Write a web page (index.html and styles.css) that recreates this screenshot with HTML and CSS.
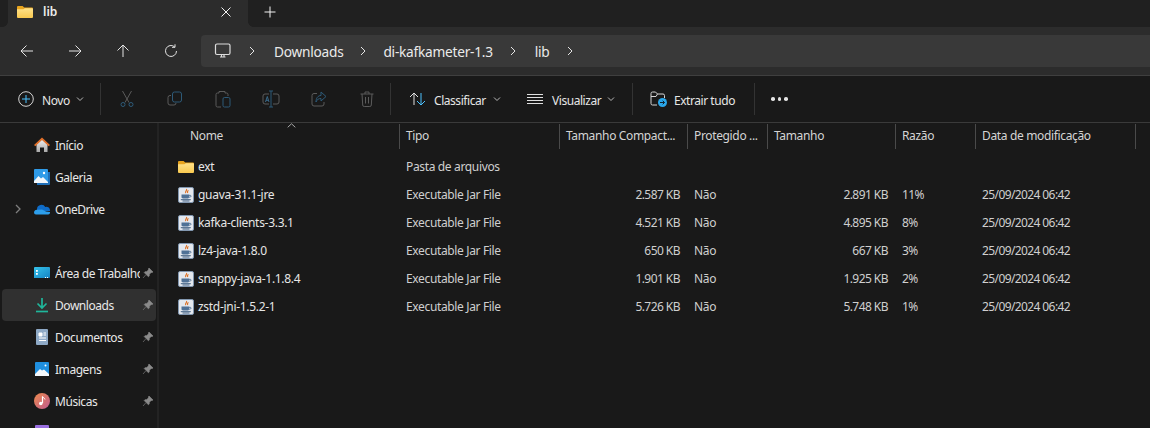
FILE: index.html
```html
<!DOCTYPE html>
<html lang="pt">
<head>
<meta charset="utf-8">
<title>lib</title>
<link rel="stylesheet" href="styles.css">
</head>
<body>
<svg class="defs" width="0" height="0" aria-hidden="true">
  <defs>
    <linearGradient id="folderFront" x1="0" y1="0" x2="0" y2="1"><stop offset="0" stop-color="#ffe28a"/><stop offset="1" stop-color="#f9c94f"/></linearGradient>
    <linearGradient id="homeWall" x1="0" y1="0" x2="0" y2="1"><stop offset="0" stop-color="#efefef"/><stop offset="1" stop-color="#a9a9a9"/></linearGradient>
    <linearGradient id="deskFill" x1="0" y1="0" x2="1" y2="1"><stop offset="0" stop-color="#35c3ea"/><stop offset="1" stop-color="#1583c4"/></linearGradient>
    <symbol id="folder" viewBox="0 0 16 16">
      <path d="M0 3a1 1 0 0 1 1-1h4.600l1.600 1.500H15a1 1 0 0 1 1 1V6H0z" fill="#e8a41e"/>
      <path d="M0 5.200l6.400 0 1.400-1H15a1 1 0 0 1 1 1V13a1 1 0 0 1-1 1H1a1 1 0 0 1-1-1z" fill="url(#folderFront)"/>
    </symbol>
    <symbol id="jar" viewBox="0 0 16 16">
      <rect x="0.500" y="0.500" width="15" height="15" rx="1.500" fill="#e4e8ee" stroke="#8297b0"/>
      <path d="M8.500 2c1 1.500-2 2.500-.7 4.200M10.500 3.500c-1.600.8-1.200 1.600-.6 2.500" fill="none" stroke="#dc6f22" stroke-width="1.100"/>
      <path d="M3.500 7.500h7.500v2.800c0 .8-.8 1.200-1.500 1.200H5c-.8 0-1.500-.5-1.500-1.200z" fill="#4f7196"/>
      <path d="M11 8.300h1.200c1 0 1 1.800-.2 1.800H11" fill="none" stroke="#4f7196"/>
      <path d="M2.800 12.700h10M4.500 14h7" stroke="#3f5f82" stroke-width="1"/>
    </symbol>
    <symbol id="pin" viewBox="0 0 12 12">
      <path d="M7 1l4 4-1 .6-.8-.2L7.400 7.300l-.2 1.800-.8.700L2.200 5.600l.7-.8 1.800-.2L6.600 2.800l-.2-.8zM3.800 7.800L1 11" fill="#8a8a8a" stroke="#8a8a8a" stroke-width=".6"/>
    </symbol>
  </defs>
</svg>

<header class="tabbar">
  <div class="tab">
    <svg class="tab-folder" width="16" height="16"><use href="#folder"/></svg>
    <span class="tab-title">lib</span>
    <svg class="tab-close" width="12" height="12" viewBox="0 0 12 12"><path d="M1.500 1.500l9 9M10.500 1.500l-9 9" stroke="#f2f2f2" fill="none"/></svg>
  </div>
  <svg class="tab-add" width="14" height="14" viewBox="0 0 14 14"><path d="M7 1.500v11M1.500 7h11" stroke="#f2f2f2" fill="none"/></svg>
</header>

<nav class="navbar">
  <div class="nav-buttons">
    <svg width="16" height="16" viewBox="0 0 16 16"><path d="M14 8H2M7.500 2.500L2 8l5.500 5.500" class="st-nav"/></svg>
    <svg width="16" height="16" viewBox="0 0 16 16"><path d="M2 8h12M8.500 2.500L14 8l-5.500 5.500" class="st-nav"/></svg>
    <svg width="16" height="16" viewBox="0 0 16 16"><path d="M8 14V2M2.500 7.500L8 2l5.500 5.500" class="st-nav"/></svg>
    <svg width="16" height="16" viewBox="0 0 16 16"><path d="M13.500 8a5.500 5.500 0 1 1-1.800-4.100M12 1.300v3h-3" class="st-nav"/></svg>
  </div>
  <div class="crumbs">
    <svg class="pc" width="18" height="18" viewBox="0 0 18 18"><rect x="1.500" y="2" width="14.500" height="10.500" rx="1.500" class="st-pc"/><path d="M6 15h5.500M7.500 13v2M10 13v2" class="st-pc"/></svg>
    <svg class="chev" width="8" height="10" viewBox="0 0 8 10"><path d="M2 1l4 4-4 4" class="st-nav"/></svg>
    <span class="crumb">Downloads</span>
    <svg class="chev" width="8" height="10" viewBox="0 0 8 10"><path d="M2 1l4 4-4 4" class="st-nav"/></svg>
    <span class="crumb crumb-mid">di-kafkameter-1.3</span>
    <svg class="chev" width="8" height="10" viewBox="0 0 8 10"><path d="M2 1l4 4-4 4" class="st-nav"/></svg>
    <span class="crumb">lib</span>
    <svg class="chev" width="8" height="10" viewBox="0 0 8 10"><path d="M2 1l4 4-4 4" class="st-nav"/></svg>
  </div>
</nav>

<section class="toolbar">
  <div class="tool tool-new">
    <svg width="16" height="16" viewBox="0 0 16 16"><circle cx="8" cy="8" r="7.300" fill="none" stroke="#d5d5d5"/><path d="M8 4v8M4 8h8" stroke="#4cc2ff" fill="none"/></svg>
    <span class="tool-label">Novo</span>
    <svg class="caret" width="8" height="6" viewBox="0 0 8 6"><path d="M1 1.500l3 3 3-3" class="st-caret"/></svg>
  </div>
  <span class="sep"></span>
  <div class="disabled-tools">
    <svg width="16" height="18" viewBox="0 0 16 18"><path d="M3.500 1l6.500 11.500M12.500 1L6 12.500" stroke="#5b5b5b" fill="none"/><circle cx="4" cy="14.500" r="2" fill="none" stroke="#2d5a78"/><circle cx="12" cy="14.500" r="2" fill="none" stroke="#2d5a78"/></svg>
    <svg width="16" height="16" viewBox="0 0 16 16"><rect x="5.500" y="1" width="9" height="10" rx="2" fill="none" stroke="#2d5a78"/><path d="M4 4.500H3a2 2 0 0 0-2 2V12a2 2 0 0 0 2 2h4a2 2 0 0 0 2-2" fill="none" stroke="#5b5b5b"/></svg>
    <svg width="16" height="18" viewBox="0 0 16 18"><path d="M4 3H2.500A1.500 1.500 0 0 0 1 4.500v11A1.500 1.500 0 0 0 2.500 17H6M4 3V1.500h6V3M10 3h1.500A1.500 1.500 0 0 1 13 4.500V6" fill="none" stroke="#5b5b5b"/><rect x="8" y="7.500" width="7" height="9.500" rx="1.500" fill="none" stroke="#2d5a78"/></svg>
    <svg width="18" height="18" viewBox="0 0 18 18"><path d="M7 4H3a2 2 0 0 0-2 2v6a2 2 0 0 0 2 2h4M11 4h4a2 2 0 0 1 2 2v6a2 2 0 0 1-2 2h-4" fill="none" stroke="#5b5b5b"/><path d="M9 1v16M7 1h4M7 17h4" stroke="#2d5a78" fill="none"/><path d="M3.500 12L5.300 6.500 7 12M4 10.300h2.500" stroke="#3a6a8a" fill="none"/></svg>
    <svg width="16" height="16" viewBox="0 0 16 16"><path d="M6 2.500H3a2 2 0 0 0-2 2V13a2 2 0 0 0 2 2h8a2 2 0 0 0 2-2v-2" fill="none" stroke="#5b5b5b"/><path d="M10 1l5 4.500L10 10V7.500C7.500 7.500 6 8.500 5 11c0-4 2-6.500 5-6.500z" fill="none" stroke="#2d5a78"/></svg>
    <svg width="14" height="16" viewBox="0 0 14 16"><path d="M.5 3h13M5 3V1h4v2M2 3l.7 11a1.500 1.500 0 0 0 1.500 1.500h5.600a1.500 1.500 0 0 0 1.500-1.500L12 3M5.500 6v6.500M8.500 6v6.500" fill="none" stroke="#5b5b5b"/></svg>
  </div>
  <span class="sep"></span>
  <div class="tool tool-sort">
    <svg width="18" height="16" viewBox="0 0 18 16"><path d="M5 14V2M1 6l4-4 4 4" stroke="#e0e0e0" fill="none"/><path d="M12 2v12M8 10l4 4 4-4" stroke="#4cc2ff" fill="none"/></svg>
    <span class="tool-label">Classificar</span>
    <svg class="caret" width="8" height="6" viewBox="0 0 8 6"><path d="M1 1.500l3 3 3-3" class="st-caret"/></svg>
  </div>
  <div class="tool tool-view">
    <svg width="16" height="12" viewBox="0 0 16 12"><path d="M0 1.500h16M0 4.500h16M0 7.500h16M0 10.500h16" stroke="#e0e0e0" fill="none"/></svg>
    <span class="tool-label">Visualizar</span>
    <svg class="caret" width="8" height="6" viewBox="0 0 8 6"><path d="M1 1.500l3 3 3-3" class="st-caret"/></svg>
  </div>
  <span class="sep"></span>
  <div class="tool tool-extract">
    <svg width="17" height="16" viewBox="0 0 17 16"><path d="M7 14H2.500A1.500 1.500 0 0 1 1 12.500v-10A1.500 1.500 0 0 1 2.500 1h3L7.500 3H13a1.500 1.500 0 0 1 1.500 1.500V7M1 5.500h5L7.500 3" fill="none" stroke="#d5d5d5"/><circle cx="12.500" cy="11.500" r="4.500" fill="#2aa7ea"/><path d="M10 11.500h4.500M12.700 9.700l1.800 1.800-1.800 1.800" stroke="#10222e" fill="none"/></svg>
    <span class="tool-label">Extrair tudo</span>
  </div>
  <span class="sep"></span>
  <div class="more"><i></i><i></i><i></i></div>
</section>

<main class="content">
  <aside class="sidebar">
    <ul class="nav-group">
      <li class="nav-item">
        <svg width="16" height="16" viewBox="0 0 16 16"><path d="M2.500 7.500L8 2.500l5.500 5V15H10v-4.500H6V15H2.500z" fill="url(#homeWall)"/><path d="M8 .5L0 8l1.300 1.300L8 3l6.700 6.300L16 8z" fill="#e2702a"/></svg>
        <span class="nav-label">Início</span>
      </li>
      <li class="nav-item">
        <svg width="16" height="16" viewBox="0 0 16 16"><path d="M14 3h2v12a1 1 0 0 1-1 1H3v-2h11z" fill="#1f6fb8"/><rect y="0" width="14" height="14" rx="1" fill="#2f9be8"/><path d="M0 12l4.500-5 2.500 2.500L9 8l5 5v1H0z" fill="#f3f7fb"/><circle cx="10" cy="4" r="1.200" fill="#fff"/></svg>
        <span class="nav-label">Galeria</span>
      </li>
      <li class="nav-item">
        <svg class="expander" width="6" height="10" viewBox="0 0 6 10"><path d="M1 1l4 4-4 4" fill="none" stroke="#7e7e7e" stroke-width="1.300"/></svg>
        <svg width="16" height="16" viewBox="0 0 16 16"><path d="M3 8.500a4.500 4.500 0 0 1 8.300-2.500A3.500 3.500 0 0 1 16 9v1H3z" fill="#0f6cc8"/><path d="M0 11.500A2.800 2.800 0 0 1 3.500 8.800L8 8.600l4 1.900 4 .5v.7a1.800 1.800 0 0 1-1.800 1.800H2A2 2 0 0 1 0 11.500z" fill="#2d9eeb"/></svg>
        <span class="nav-label">OneDrive</span>
      </li>
    </ul>
    <ul class="nav-group group-pinned">
      <li class="nav-item">
        <svg width="16" height="16" viewBox="0 0 16 16"><path d="M1 2h14a1 1 0 0 1 1 1v9a1 1 0 0 1-1 1H0V3a1 1 0 0 1 1-1z" fill="url(#deskFill)"/><rect x="2" y="5" width="1.800" height="1.800" fill="#fff"/><rect x="2" y="8" width="1.800" height="1.800" fill="#fff"/><path d="M11 12h1v1h-1zM13 12h1v1h-1z" fill="#fff"/></svg>
        <span class="nav-label">Área de Trabalho</span>
        <svg class="pin" width="12" height="12"><use href="#pin"/></svg>
      </li>
      <li class="nav-item is-active">
        <svg width="16" height="16" viewBox="0 0 16 16"><path d="M8 1v9.500M3.500 6.500L8 11l4.500-4.500" fill="none" stroke="#1fb69a" stroke-width="1.700"/><path d="M2 14.500h12" stroke="#1fb69a" stroke-width="1.700"/></svg>
        <span class="nav-label">Downloads</span>
        <svg class="pin" width="12" height="12"><use href="#pin"/></svg>
      </li>
      <li class="nav-item">
        <svg width="16" height="16" viewBox="0 0 16 16"><rect x="2" y="0" width="12" height="16" rx="1" fill="#8ea9c6"/><path d="M5 4h3v3H5z M9.500 4H12M9.500 6H12M5 9h7M5 11.500h7" stroke="#fff" fill="#fff"/></svg>
        <span class="nav-label">Documentos</span>
        <svg class="pin" width="12" height="12"><use href="#pin"/></svg>
      </li>
      <li class="nav-item">
        <svg width="16" height="16" viewBox="0 0 16 16"><rect x="1" y="1" width="14" height="14" rx="1" fill="#1f8fdf"/><path d="M1 13l5-5 2 1.500 2-1 5 4.500v2H1z" fill="#f3f7fb"/><circle cx="11.500" cy="4.500" r="1" fill="#fff"/></svg>
        <span class="nav-label">Imagens</span>
        <svg class="pin" width="12" height="12"><use href="#pin"/></svg>
      </li>
      <li class="nav-item">
        <svg width="16" height="16" viewBox="0 0 16 16"><defs><linearGradient id="music" x1="0" y1="0" x2="1" y2="1"><stop offset="0" stop-color="#ec8a4d"/><stop offset="1" stop-color="#c05a90"/></linearGradient></defs><circle cx="8" cy="8" r="8" fill="url(#music)"/><path d="M8.500 3.500v6.500" stroke="#fff" stroke-width="1.200"/><path d="M8.500 3.500c.5 1.500 2.500 1.500 2.500 3" fill="none" stroke="#fff"/><circle cx="6.800" cy="10.500" r="1.800" fill="#fff"/></svg>
        <span class="nav-label">Músicas</span>
        <svg class="pin" width="12" height="12"><use href="#pin"/></svg>
      </li>
      <li class="nav-item">
        <svg width="16" height="16" viewBox="0 0 16 16"><rect x="1" y="0" width="14" height="16" rx="1" fill="#9a6fe0"/></svg>
      </li>
    </ul>
  </aside>

  <section class="files">
    <svg class="sort-arrow" width="9" height="5" viewBox="0 0 9 5"><path d="M.7 4.300L4.500 .8l3.800 3.500" fill="none" stroke="#a8a8a8"/></svg>
    <div class="row head">
      <div class="cell name-head">Nome</div>
      <div class="cell">Tipo</div>
      <div class="cell">Tamanho Compact...</div>
      <div class="cell">Protegido ...</div>
      <div class="cell">Tamanho</div>
      <div class="cell">Razão</div>
      <div class="cell">Data de modificação</div>
    </div>

    <div class="row item">
      <div class="cell name"><svg width="16" height="16"><use href="#folder"/></svg><span>ext</span></div>
      <div class="cell">Pasta de arquivos</div>
      <div class="cell"></div><div class="cell"></div><div class="cell"></div><div class="cell"></div><div class="cell"></div>
    </div>
    <div class="row item">
      <div class="cell name"><svg width="16" height="16"><use href="#jar"/></svg><span>guava-31.1-jre</span></div>
      <div class="cell">Executable Jar File</div>
      <div class="cell num">2.587 KB</div><div class="cell">Não</div><div class="cell num">2.891 KB</div><div class="cell num-left">11%</div><div class="cell num-left">25/09/2024 06:42</div>
    </div>
    <div class="row item">
      <div class="cell name"><svg width="16" height="16"><use href="#jar"/></svg><span>kafka-clients-3.3.1</span></div>
      <div class="cell">Executable Jar File</div>
      <div class="cell num">4.521 KB</div><div class="cell">Não</div><div class="cell num">4.895 KB</div><div class="cell num-left">8%</div><div class="cell num-left">25/09/2024 06:42</div>
    </div>
    <div class="row item">
      <div class="cell name"><svg width="16" height="16"><use href="#jar"/></svg><span>lz4-java-1.8.0</span></div>
      <div class="cell">Executable Jar File</div>
      <div class="cell num">650 KB</div><div class="cell">Não</div><div class="cell num">667 KB</div><div class="cell num-left">3%</div><div class="cell num-left">25/09/2024 06:42</div>
    </div>
    <div class="row item">
      <div class="cell name"><svg width="16" height="16"><use href="#jar"/></svg><span>snappy-java-1.1.8.4</span></div>
      <div class="cell">Executable Jar File</div>
      <div class="cell num">1.901 KB</div><div class="cell">Não</div><div class="cell num">1.925 KB</div><div class="cell num-left">2%</div><div class="cell num-left">25/09/2024 06:42</div>
    </div>
    <div class="row item">
      <div class="cell name"><svg width="16" height="16"><use href="#jar"/></svg><span>zstd-jni-1.5.2-1</span></div>
      <div class="cell">Executable Jar File</div>
      <div class="cell num">5.726 KB</div><div class="cell">Não</div><div class="cell num">5.748 KB</div><div class="cell num-left">1%</div><div class="cell num-left">25/09/2024 06:42</div>
    </div>
  </section>
</main>
</body>
</html>
```

FILE: styles.css
```css
* { box-sizing: border-box; }
html, body { margin: 0; padding: 0; }
body {
  width: 1150px;
  height: 428px;
  overflow: hidden;
  background: #191919;
  color: #e6e6e6;
  font-family: "Noto Sans", "Liberation Sans", sans-serif;
  font-size: 12px;
  letter-spacing: -0.35px;
  display: flex;
  flex-direction: column;
}
.defs { position: absolute; }
svg { display: block; flex: none; }
ul { list-style: none; margin: 0; padding: 0; }

.st-nav { fill: none; stroke: #e4e4e4; stroke-width: 1; }
.st-pc { fill: none; stroke: #dcdcdc; stroke-width: 1.200; }
.st-caret { fill: none; stroke: #b8b8b8; stroke-width: 1; }

.tabbar {
  height: 27px;
  background: #202020;
  display: flex;
  align-items: center;
  padding-left: 8px;
  flex: none;
}
.tab {
  position: relative;
  width: 240px;
  height: 27px;
  background: #2c2c2c;
  display: flex;
  align-items: center;
  padding: 0 16px 0 9px;
  margin-right: 15px;
}
.tab::before,
.tab::after {
  content: "";
  position: absolute;
  bottom: 0;
  width: 5px;
  height: 5px;
}
.tab::before {
  right: 100%;
  background: radial-gradient(circle at 0 0, #202020 4.500px, #2c2c2c 5px);
}
.tab::after {
  left: 100%;
  background: radial-gradient(circle at 100% 0, #202020 4.500px, #2c2c2c 5px);
}
.tab-folder { margin-top: -4px; }
.tab-title { flex: 1; margin-left: 10px; font-size: 12px; font-weight: 600; color: #eee; margin-top: -4px; letter-spacing: 0; }
.tab-close { margin-top: -4px; }
.tab-add { margin-top: -4px; }

.navbar {
  height: 49px;
  background: #2c2c2c;
  border-bottom: 1px solid #3f3f3f;
  display: flex;
  align-items: center;
  padding-left: 19px;
  flex: none;
}
.nav-buttons {
  width: 182px;
  display: flex;
  gap: 32px;
}
.crumbs {
  flex: 1;
  height: 32px;
  background: #393939;
  border-radius: 4px 0 0 4px;
  display: flex;
  align-items: center;
  padding-left: 13px;
  font-size: 13.700px;
  letter-spacing: -0.25px;
  color: #eaeaea;
}
.pc { margin-right: 16px; }
.chev { margin-right: 18px; }
.crumb { margin-right: 16px; }
.crumb-mid { margin-left: -2px; }

.toolbar {
  height: 47px;
  background: #191919;
  border-bottom: 1px solid #3a3a3a;
  display: flex;
  align-items: center;
  flex: none;
}
.tool { display: flex; align-items: center; flex: none; }
.tool-label { letter-spacing: -0.45px; position: relative; top: 1px; }
.tool-new { margin-left: 18px; width: 82px; gap: 8px; }
.tool-new .caret { margin-left: -2px; }
.sep { width: 1px; height: 32px; background: #333; flex: none; }
.disabled-tools {
  display: grid;
  grid-template-columns: repeat(6, 48px);
  justify-items: center;
  align-items: center;
  width: 289px;
  padding-left: 2px;
  flex: none;
}
.tool-sort { gap: 7px; width: 118px; margin-left: 18px; }
.tool-sort .caret { margin-left: 0; }
.tool-view { gap: 9px; width: 105px; }
.tool-view .caret { margin-left: -3px; }
.tool-extract { gap: 7px; width: 104px; margin-left: 17px; }
.more { display: flex; gap: 3px; margin-left: 16px; }
.more i { width: 3.500px; height: 3.500px; background: #e4e4e4; border-radius: 50%; display: block; }

.content { flex: 1; display: flex; min-height: 0; }

.sidebar {
  width: 159px;
  margin-right: 1px;
  border-right: 2px solid #232323;
  padding: 6px 0 0 2px;
  flex: none;
  overflow: hidden;
}
.nav-group { width: 154px; }
.group-pinned { margin-top: 32px; }
.nav-item {
  position: relative;
  height: 32px;
  display: flex;
  align-items: center;
  padding-left: 32px;
  border-radius: 4px;
  color: #e8e8e8;
  letter-spacing: -0.45px;
}
.nav-item.is-active { background: #303030; }
.nav-label {
  margin-left: 5px;
  width: 85px;
  white-space: nowrap;
  overflow: hidden;
}
.pin { margin-left: 2px; }
.expander { position: absolute; left: 13px; top: 11px; }

.files {
  position: relative;
  flex: 1;
  min-width: 0;
}
.sort-arrow { position: absolute; left: 127px; top: 0; }
.row {
  display: grid;
  grid-template-columns: 240px 160px 128px 80px 128px 80px 160px;
  align-items: center;
}
.head { height: 26px; color: #d4d4d4; }
.head .cell { height: 25px; border-right: 1px solid #4a4a4a; display: flex; align-items: center; padding-bottom: 1px; }
.item { height: 28px; color: #cfcfcf; }
.item:nth-child(3) { margin-top: 3px; }
.cell { padding: 0 6px 0 6px; white-space: nowrap; overflow: hidden; }
.item .cell { padding-top: 1px; }
.name-head { padding-left: 30px; }
.num { text-align: right; padding-right: 8px; letter-spacing: -0.55px; }
.num-left { letter-spacing: -0.6px; }
.name { display: flex; align-items: center; gap: 4px; padding-left: 18px; color: #e6e6e6; letter-spacing: -0.3px; }
```
